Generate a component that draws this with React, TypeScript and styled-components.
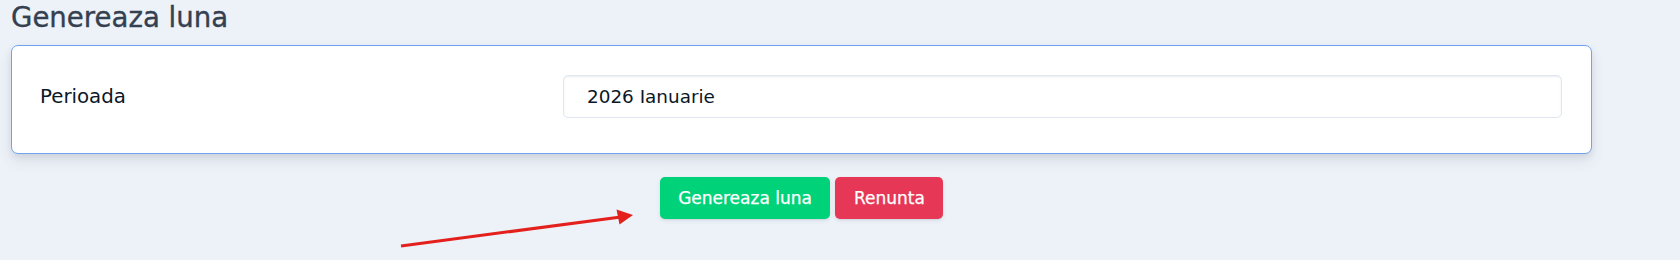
import React from "react";
import styled, { createGlobalStyle } from "styled-components";

const GlobalStyle = createGlobalStyle`
  html, body {
    margin: 0;
    padding: 0;
    background: #edf2f9;
  }
  body {
    font-family: "DejaVu Sans", "Open Sans", "Liberation Sans", sans-serif;
    -webkit-font-smoothing: antialiased;
  }
  * { box-sizing: border-box; }
`;

const Page = styled.div`
  position: relative;
  width: 1680px;
  height: 260px;
  padding: 0 88px 0 11px;
`;

const Title = styled.h4`
  margin: 0;
  height: 45px;
  padding-top: 2px;
  font-size: 27.6px;
  font-weight: 400;
  line-height: 32px;
  color: #344050;
  -webkit-text-stroke: 0.35px #344050;
`;

const Card = styled.div`
  background: #fff;
  border: 1px solid #6fa3ef;
  border-radius: 7px;
  box-shadow: 0 7px 14px 0 rgba(65, 69, 88, 0.1), 0 3px 6px 0 rgba(0, 0, 0, 0.07);
  padding: 29px 29px 35px 28px;
`;

const FormRow = styled.div`
  display: grid;
  grid-template-columns: 523px 1fr;
  align-items: center;
`;

const Label = styled.label`
  font-size: 19.8px;
  font-weight: 400;
  color: #0b1727;
`;

const Input = styled.div`
  height: 43px;
  border: 1px solid #dfe7f2;
  border-radius: 5px;
  box-shadow: inset 0 1px 2px rgba(0, 0, 0, 0.075);
  padding: 0 23px;
  display: flex;
  align-items: center;
  font-size: 18.4px;
  color: #0b1727;
`;

const Actions = styled.div`
  display: flex;
  justify-content: center;
  gap: 5px;
  margin-top: 23px;
`;

const Button = styled.button<{ $variant: "success" | "danger" }>`
  height: 42px;
  padding: 0 18.5px;
  border: none;
  border-radius: 5px;
  font-family: inherit;
  font-size: 17px;
  font-weight: 400;
  color: #fff;
  -webkit-text-stroke: 0.25px #fff;
  background: ${(p) => (p.$variant === "success" ? "#00d27a" : "#e63757")};
  box-shadow: 0 2px 5px 0 rgba(43, 45, 80, 0.08), 0 1px 1.5px 0 rgba(0, 0, 0, 0.07);
  cursor: pointer;
`;

const ArrowOverlay = styled.svg`
  position: absolute;
  left: 0;
  top: 0;
  pointer-events: none;
`;

export default function App() {
  return (
    <>
      <GlobalStyle />
      <Page>
        <Title>Genereaza luna</Title>
        <Card>
          <FormRow>
            <Label>Perioada</Label>
            <Input>2026 Ianuarie</Input>
          </FormRow>
        </Card>
        <Actions>
          <Button $variant="success">Genereaza luna</Button>
          <Button $variant="danger">Renunta</Button>
        </Actions>
        <ArrowOverlay width="1680" height="260" viewBox="0 0 1680 260">
          <line x1="401" y1="246" x2="619" y2="217.2" stroke="#e3201b" strokeWidth="3" />
          <polygon points="616.5,209.5 633,215 619.5,224.5" fill="#e3201b" />
        </ArrowOverlay>
      </Page>
    </>
  );
}
